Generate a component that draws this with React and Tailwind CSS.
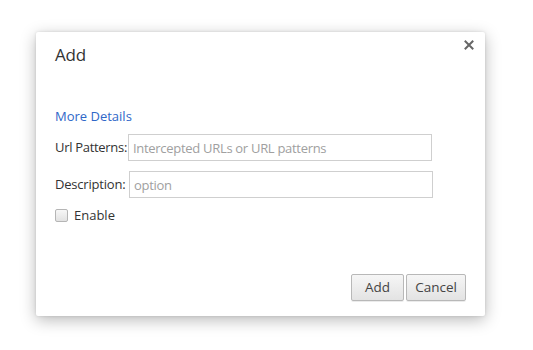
export default function App() {
  const font = { fontFamily: '"Open Sans", "Noto Sans", sans-serif' };
  return (
    <div className="w-[533px] h-[350px] bg-white overflow-hidden pt-[32px] pl-[36px]" style={font}>
      <div className="relative w-[449px] h-[284px] bg-white rounded-[2px] shadow-[0_4px_16px_rgba(0,0,0,0.28),0_0_3px_rgba(0,0,0,0.12)] flex flex-col pl-[19px] pr-[19px]">
        <button className="absolute right-[8px] top-[5px] w-[16px] h-[16px] flex items-center justify-center">
          <svg width="10" height="10" viewBox="0 0 10 10">
            <path d="M1.5 1.5 L8.5 8.5 M8.5 1.5 L1.5 8.5" stroke="#666" strokeWidth="2" strokeLinecap="square" />
          </svg>
        </button>
        <div className="pt-[12px] text-[17px] leading-[22px] text-[#333] tracking-[-0.2px]">Add</div>
        <div className="mt-[41px] text-[13px] leading-[18px] text-[#2f67c8]">More Details</div>
        <div className="mt-[9px] flex items-center h-[27px]">
          <span className="w-[73px] text-[13px] text-[#333] whitespace-nowrap tracking-[-0.3px]">Url Patterns:</span>
          <input
            className="w-[304px] h-[27px] border border-[#cfcfcf] px-[4px] text-[13px] text-[#333] placeholder:text-[#a0a0a0] outline-none tracking-[-0.3px]"
            placeholder="Intercepted URLs or URL patterns"
            style={font}
          />
        </div>
        <div className="mt-[10px] flex items-center h-[27px]">
          <span className="w-[74px] text-[13px] text-[#333] whitespace-nowrap tracking-[-0.2px]">Description:</span>
          <input
            className="w-[304px] h-[27px] border border-[#cfcfcf] px-[4px] text-[13px] text-[#333] placeholder:text-[#a0a0a0] outline-none tracking-[-0.3px]"
            placeholder="option"
            style={font}
          />
        </div>
        <label className="mt-[8px] flex items-center gap-[6px]">
          <span className="w-[13px] h-[13px] rounded-[2px] border border-[#b5b5b5] bg-gradient-to-b from-[#f7f7f7] to-[#e2e2e2]"></span>
          <span className="text-[13px] text-[#333]">Enable</span>
        </label>
        <div className="mt-auto mb-[15px] flex justify-end gap-[2px]">
          <button className="w-[53px] h-[27px] rounded-[2px] border border-[#b8b8b8] bg-gradient-to-b from-[#f6f6f6] to-[#e3e3e3] text-[13.5px] text-[#444] shadow-[0_1px_0_rgba(0,0,0,0.08)]">Add</button>
          <button className="w-[60px] h-[27px] rounded-[2px] border border-[#b8b8b8] bg-gradient-to-b from-[#f6f6f6] to-[#e3e3e3] text-[13.5px] text-[#444] shadow-[0_1px_0_rgba(0,0,0,0.08)]">Cancel</button>
        </div>
      </div>
    </div>
  );
}
